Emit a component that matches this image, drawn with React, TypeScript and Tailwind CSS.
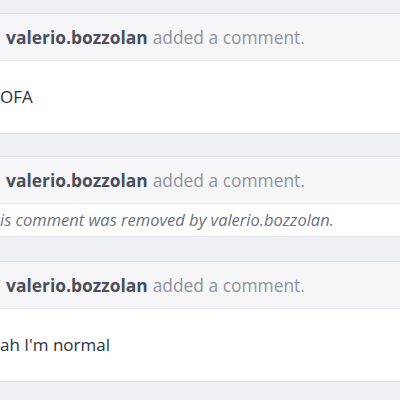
import React from "react";

const FONT = { fontFamily: '"Open Sans", "Liberation Sans", sans-serif' };

function Header() {
  return (
    <div className="h-[47px] bg-[#f6f6f8] border-b border-[#e6e8ec] flex items-center pl-[6px] text-[17.4px] whitespace-nowrap">
      <span className="font-bold text-[#4a4f5c]">valerio.bozzolan</span>
      <span className="ml-[5px] text-[#8e939c]">added a comment.</span>
    </div>
  );
}

function Comment({ text }: { text: string }) {
  return (
    <div className="border-y border-[#dcdfe5]">
      <Header />
      <div className="h-[72px] bg-white flex items-center text-[17px] text-[#2e323a] whitespace-nowrap">
        {text}
      </div>
    </div>
  );
}

export default function App() {
  return (
    <div className="w-[400px] h-[400px] overflow-hidden bg-[#eff0f4] pt-[13px]" style={FONT}>
      <Comment text="OFA" />
      <div className="mt-[22px] border-t border-[#dcdfe5]">
        <Header />
        <div className="h-[33px] bg-white border-b border-[#e3e5ea] flex items-center text-[16.5px] italic text-[#6a707d] whitespace-nowrap">
          is comment was removed by valerio.bozzolan.
        </div>
      </div>
      <div className="mt-[24px]">
        <Comment text="ah I'm normal" />
      </div>
    </div>
  );
}
